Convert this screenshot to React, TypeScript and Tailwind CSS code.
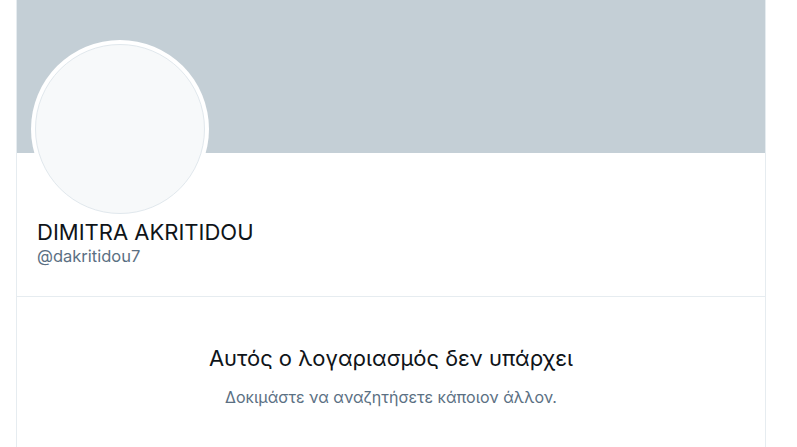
export default function App() {
  return (
    <div className="min-h-[447px] w-[797px] bg-white font-['Inter','Noto_Sans',sans-serif]">
      <div className="ml-[16px] flex min-h-[447px] w-[750px] flex-col border-x border-[#e6ecf0]">
        <div className="h-[153px] bg-[#c4cfd6]" />
        <div className="px-[14px]">
          <div className="-mt-[113px] h-[178px] w-[178px] rounded-full bg-white p-[4px]">
            <div className="h-full w-full rounded-full border border-[#e1e8ed] bg-[#f7f9fa]" />
          </div>
          <div className="mt-[1px] pl-[6px] pb-[30px]">
            <div className="text-[22px] leading-[26px] text-[#0f1419]">DIMITRA AKRITIDOU</div>
            <div className="mt-[1px] text-[16.5px] leading-[20px] text-[#5b7083]">@dakritidou7</div>
          </div>
        </div>
        <div className="border-t border-[#e6ecf0] pt-[48px] text-center">
          <div className="text-[22px] leading-[26px] text-[#0f1419]">Αυτός ο λογαριασμός δεν υπάρχει</div>
          <div className="mt-[16px] text-[16px] leading-[20px] text-[#5b7083]">Δοκιμάστε να αναζητήσετε κάποιον άλλον.</div>
        </div>
      </div>
    </div>
  );
}
